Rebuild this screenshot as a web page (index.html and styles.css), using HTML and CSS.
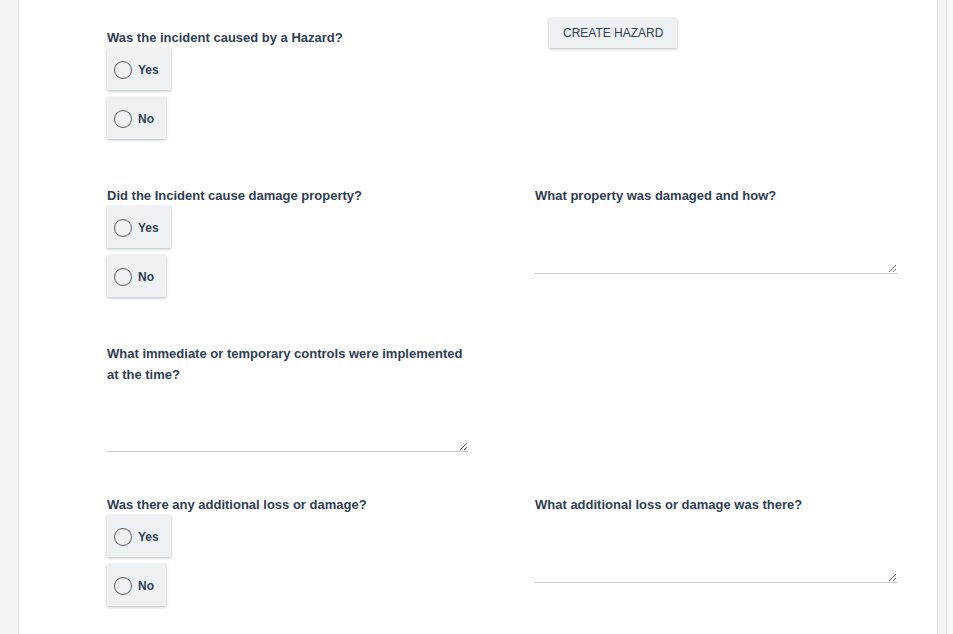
FILE: index.html
```html
<!DOCTYPE html>
<html lang="en">
<head>
    <meta charset="UTF-8">
    <meta name="viewport" content="width=device-width, initial-scale=1.0">
    <title>Incident Report</title>
    <link rel="stylesheet" href="styles.css">
</head>
<body>
    <div class="pagina">
        <main class="tarjeta">
            <section class="fila fila-primera">
                <div class="campo campo-bajo">
                    <p class="pregunta">Was the incident caused by a Hazard?</p>
                    <label class="opcion"><span class="circulo"></span>Yes</label>
                    <label class="opcion"><span class="circulo"></span>No</label>
                </div>
                <div class="campo">
                    <button class="boton">CREATE HAZARD</button>
                </div>
            </section>

            <section class="fila">
                <div class="campo">
                    <p class="pregunta">Did the Incident cause damage property?</p>
                    <label class="opcion"><span class="circulo"></span>Yes</label>
                    <label class="opcion"><span class="circulo"></span>No</label>
                </div>
                <div class="campo">
                    <p class="pregunta">What property was damaged and how?</p>
                    <textarea class="texto"></textarea>
                </div>
            </section>

            <section class="fila fila-corta">
                <div class="campo">
                    <p class="pregunta">What immediate or temporary controls were implemented at the time?</p>
                    <textarea class="texto texto-bajo"></textarea>
                </div>
                <div class="campo"></div>
            </section>

            <section class="fila">
                <div class="campo">
                    <p class="pregunta">Was there any additional loss or damage?</p>
                    <label class="opcion"><span class="circulo"></span>Yes</label>
                    <label class="opcion"><span class="circulo"></span>No</label>
                </div>
                <div class="campo">
                    <p class="pregunta">What additional loss or damage was there?</p>
                    <textarea class="texto"></textarea>
                </div>
            </section>
        </main>
        <div class="barra"></div>
    </div>
</body>
</html>
```

FILE: styles.css
```css
html, body {
    margin: 0;
    padding: 0;
    height: 634px;
    overflow: hidden;
    background-color: #f4f4f4;
    font-family: "Liberation Sans", Arial, sans-serif;
    color: #2f3d52;
}
.pagina {
    display: flex;
    height: 634px;
    padding-left: 18px;
}
.tarjeta {
    width: 920px;
    flex-shrink: 0;
    background-color: #fff;
    border-left: 1px solid #e2e2e2;
    border-right: 1px solid #e2e2e2;
    padding: 17px 0 0 88px;
    box-sizing: border-box;
}
.barra {
    margin-left: 8px;
    width: 6px;
    border-left: 1px solid #e2e2e2;
    background-color: #f8f8f8;
}
.fila {
    display: grid;
    grid-template-columns: 361px 362px;
    column-gap: 67px;
    margin-bottom: 46px;
}
.fila-corta {
    margin-bottom: 42px;
}
.campo-bajo {
    padding-top: 10px;
}
.pregunta {
    margin: 0;
    font-size: 13px;
    font-weight: 700;
    line-height: 21px;
}
.opcion {
    display: flex;
    align-items: center;
    width: fit-content;
    height: 42px;
    padding: 2px 12px 0 7px;
    margin-bottom: 7px;
    background-color: #eef1f4;
    box-shadow: 0 1px 3px rgba(0, 0, 0, 0.28);
    font-size: 12px;
    font-weight: 700;
    box-sizing: border-box;
}
.opcion:last-child {
    margin-bottom: 0;
}
.circulo {
    width: 18px;
    height: 18px;
    border: 1.5px solid #5a5a5a;
    border-radius: 50%;
    margin-right: 6px;
    box-sizing: border-box;
}
.boton {
    height: 30px;
    margin: 1px 0 0 14px;
    padding: 0 14px;
    background-color: #eef1f4;
    border: none;
    box-shadow: 0 1px 3px rgba(0, 0, 0, 0.28);
    font-family: "Liberation Sans", Arial, sans-serif;
    font-size: 12px;
    color: #2f3d52;
}
.texto {
    display: block;
    width: 100%;
    height: 68px;
    border: none;
    border-bottom: 1px solid #c6cbd2;
    resize: vertical;
    box-sizing: border-box;
    font-family: "Liberation Sans", Arial, sans-serif;
    font-size: 13px;
    outline: none;
}
.texto-bajo {
    height: 67px;
}
```
